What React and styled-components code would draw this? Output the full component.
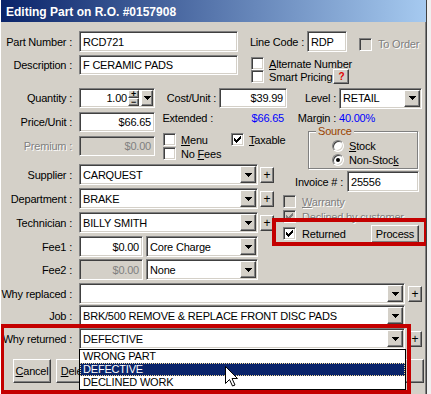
import React from "react";
import styled, { createGlobalStyle, css } from "styled-components";

const GlobalStyle = createGlobalStyle`
  html, body { margin: 0; padding: 0; }
  body {
    background: #f0f0f0;
    font-family: "Liberation Sans", Arial, sans-serif;
    font-size: 11px;
    letter-spacing: -0.2px;
    color: #000;
    overflow: hidden;
  }
`;

const sunken = css`
  box-sizing: border-box;
  border: 1px solid;
  border-color: #808080 #fff #fff #808080;
  box-shadow: inset 1px 1px #404040, inset -1px -1px #d4d0c8;
`;

const raised = css`
  box-sizing: border-box;
  background: #d4d0c8;
  border: 1px solid;
  border-color: #fff #404040 #404040 #fff;
  box-shadow: inset -1px -1px #808080;
`;

const greyText = css`
  color: #808080;
  text-shadow: 1px 1px 0 #fff;
`;

const Window = styled.div`
  width: 427px;
  height: 394px;
  box-sizing: border-box;
  background: #d4d0c8;
  border-left: 1px solid #fff;
  border-right: 1px solid #404040;
  box-shadow: inset -1px 0 #808080;
  overflow: hidden;
`;

const TitleBar = styled.div`
  height: 22px;
  box-sizing: border-box;
  padding: 3px 0 0 5px;
  line-height: 19px;
  background: linear-gradient(to right, #0a246a, #a6caf0);
  color: #fff;
  font-weight: bold;
  font-size: 12px;
  letter-spacing: 0;
  white-space: nowrap;
`;

const Body = styled.div`
  display: flow-root;
`;

const Row = styled.div`
  position: relative;
  display: flex;
  align-items: ${(p) => p.$align || "center"};
  height: ${(p) => p.$h || 21}px;
  margin-top: ${(p) => p.$mt || 0}px;
  padding-left: ${(p) => p.$pl || 0}px;
`;

const Label = styled.div`
  flex: none;
  width: ${(p) => p.$w || 78}px;
  padding-right: ${(p) => p.$pr ?? 7}px;
  box-sizing: border-box;
  text-align: right;
  white-space: nowrap;
  ${(p) => p.$grey && greyText}
`;

const Blue = styled.div`
  flex: none;
  align-self: flex-start;
  width: ${(p) => (p.$w ? `${p.$w}px` : "auto")};
  padding-right: ${(p) => p.$pr || 0}px;
  box-sizing: border-box;
  text-align: right;
  line-height: 13px;
  color: #0000ff;
`;

const TopText = styled(Label)`
  align-self: flex-start;
  line-height: 13px;
`;

const Edit = styled.div`
  ${sunken};
  flex: none;
  width: ${(p) => p.$w}px;
  height: ${(p) => p.$h || 20}px;
  margin-left: ${(p) => p.$ml || 0}px;
  padding: 0 ${(p) => (p.$right ? 3 : 2)}px 0 3px;
  display: flex;
  align-items: center;
  justify-content: ${(p) => (p.$right ? "flex-end" : "flex-start")};
  background: ${(p) => (p.$grey ? "#d4d0c8" : "#fff")};
  color: ${(p) => (p.$grey ? "#808080" : "#000")};
  white-space: nowrap;
  overflow: hidden;
`;

const ComboBox = styled.div`
  ${sunken};
  flex: none;
  width: ${(p) => p.$w}px;
  height: 21px;
  margin-left: ${(p) => p.$ml || 0}px;
  padding: 1px 1px 1px 3px;
  display: flex;
  align-items: center;
  background: #fff;
`;

const ComboText = styled.span`
  flex: 1;
  white-space: nowrap;
  overflow: hidden;
`;

const DropBtn = styled.span`
  ${raised};
  flex: none;
  width: ${(p) => p.$w || 16}px;
  height: ${(p) => p.$h || 17}px;
  margin-left: ${(p) => p.$ml || 0}px;
  display: flex;
  align-items: center;
  justify-content: center;
`;

const PlusBtn = styled.span`
  ${raised};
  flex: none;
  width: 14px;
  height: 16px;
  margin-left: ${(p) => p.$ml ?? 2}px;
  display: flex;
  align-items: center;
  justify-content: center;
  font-size: 12px;
  line-height: 1;
`;

const QtyBox = styled.div`
  ${sunken};
  flex: none;
  width: 76px;
  height: 20px;
  padding: 1px 1px 1px 3px;
  display: flex;
  align-items: center;
  background: #fff;
`;

const QtyText = styled.span`
  flex: 1;
  text-align: right;
  padding-right: 1px;
`;

const Spin = styled.span`
  flex: none;
  width: 11px;
  height: 16px;
  display: flex;
  flex-direction: column;
`;

const SpinHalf = styled.span`
  ${raised};
  height: 8px;
  display: flex;
  align-items: center;
  justify-content: center;
  font-size: 9px;
  font-weight: bold;
  line-height: 1;
`;

const CheckRow = styled.div`
  display: flex;
  align-items: center;
  gap: ${(p) => p.$gap ?? 5}px;
  height: 13px;
  margin-left: ${(p) => p.$ml || 0}px;
  margin-top: ${(p) => p.$mt || 0}px;
  white-space: nowrap;
`;

const Box = styled.span`
  ${sunken};
  flex: none;
  width: 13px;
  height: 13px;
  display: flex;
  align-items: center;
  justify-content: center;
  background: ${(p) => (p.$grey ? "#d4d0c8" : "#fff")};
`;

const CheckText = styled.span`
  ${(p) => p.$grey && greyText}
`;

const CheckCol = styled.div`
  flex: none;
  align-self: flex-start;
  display: flex;
  flex-direction: column;
  gap: ${(p) => p.$gap || 0}px;
  width: ${(p) => (p.$w ? `${p.$w}px` : "auto")};
  margin-left: ${(p) => p.$ml || 0}px;
  margin-top: ${(p) => p.$mt || 0}px;
`;

const HelpBtn = styled.span`
  ${raised};
  width: 16px;
  height: 15px;
  margin-left: -4px;
  display: flex;
  align-items: center;
  justify-content: center;
  color: #e00000;
  font-weight: bold;
  font-size: 10px;
`;

const FieldPair = styled.div`
  display: flex;
  align-items: center;
  margin-top: ${(p) => p.$mt || 0}px;
`;

const Columns = styled.div`
  display: flex;
  align-items: flex-start;
  height: 148px;
`;

const LeftCol = styled.div`
  flex: none;
  width: 272px;
`;

const RightCol = styled.div`
  flex: 1;
  margin-top: -1px;
`;

const GroupBox = styled.div`
  position: relative;
  box-sizing: border-box;
  width: 110px;
  height: 38px;
  margin-left: 35px;
  border: 1px solid #808080;
  box-shadow: inset 1px 1px #fff, 1px 1px 0 #fff;
  padding: 8px 0 0 23px;
  display: flex;
  flex-direction: column;
  gap: 2px;
`;

const Legend = styled.span`
  position: absolute;
  top: -7px;
  left: 7px;
  padding: 0 2px;
  line-height: 13px;
  background: #d4d0c8;
  color: #9a4300;
`;

const RadioRow = styled.div`
  display: flex;
  align-items: center;
  gap: 5px;
  height: 12px;
`;

const RadioDot = styled.span`
  ${sunken};
  flex: none;
  width: 12px;
  height: 12px;
  border-radius: 50%;
  background: #fff;
  display: flex;
  align-items: center;
  justify-content: center;
  &::after {
    content: "";
    width: 4px;
    height: 4px;
    border-radius: 50%;
    background: ${(p) => (p.$on ? "#000" : "transparent")};
  }
`;

const Highlight = styled.div`
  position: relative;
  margin-top: ${(p) => p.$mt || 0}px;
  &::after {
    content: "";
    position: absolute;
    top: ${(p) => p.$inset[0]}px;
    right: ${(p) => p.$inset[1]}px;
    bottom: ${(p) => p.$inset[2]}px;
    left: ${(p) => p.$inset[3]}px;
    border: 4px solid #c40000;
    pointer-events: none;
    z-index: 2;
  }
`;

const Button = styled.div`
  ${raised};
  flex: none;
  width: ${(p) => p.$w}px;
  height: ${(p) => p.$h || 24}px;
  margin-left: ${(p) => (p.$ml === "auto" ? "auto" : `${p.$ml || 0}px`)};
  margin-right: ${(p) => p.$mr || 0}px;
  display: flex;
  align-items: center;
  justify-content: center;
  white-space: nowrap;
`;

const DropList = styled.div`
  position: absolute;
  top: 21px;
  left: 78px;
  width: 327px;
  height: 41px;
  box-sizing: border-box;
  border: 1px solid #000;
  background: #fff;
  z-index: 3;
`;

const ListItem = styled.div`
  height: 13px;
  line-height: 13px;
  padding-left: 3px;
  white-space: nowrap;
  ${(p) =>
    p.$selected &&
    css`
      background: #0a246a;
      color: #fff;
      outline: 1px dotted #f5db95;
      outline-offset: -1px;
    `}
`;

const Cursor = styled.svg`
  position: absolute;
  left: 145px;
  top: 16px;
`;

const Arrow = () => (
  <svg width="7" height="4" viewBox="0 0 7 4" shapeRendering="crispEdges">
    <path d="M0 0h7v1H0zM1 1h5v1H1zM2 2h3v1H2zM3 3h1v1H3z" fill="#000" />
  </svg>
);

const Check = ({ on, grey }) => (
  <Box $grey={grey}>
    {on && (
      <svg width="7" height="7" viewBox="0 0 7 7" shapeRendering="crispEdges">
        <path
          fill={grey ? "#808080" : "#000"}
          d="M6 0h1v1H6zM5 1h2v1H5zM0 2h1v1H0zM4 2h3v1H4zM0 3h2v1H0zM3 3h3v1H3zM0 4h5v1H0zM1 5h3v1H1zM2 6h1v1H2z"
        />
      </svg>
    )}
  </Box>
);

const CheckItem = ({ on, grey, ml, mt, gap, children, extra }) => (
  <CheckRow $ml={ml} $mt={mt} $gap={gap}>
    <Check on={on} grey={grey} />
    <CheckText $grey={grey}>{children}</CheckText>
    {extra}
  </CheckRow>
);

const Combo = ({ w, ml, children }) => (
  <ComboBox $w={w} $ml={ml}>
    <ComboText>{children}</ComboText>
    <DropBtn>
      <Arrow />
    </DropBtn>
  </ComboBox>
);

const Radio = ({ on, children }) => (
  <RadioRow>
    <RadioDot $on={on} />
    <span>{children}</span>
  </RadioRow>
);

export default function App() {
  return (
    <>
      <GlobalStyle />
      <Window>
        <TitleBar>Editing Part on R.O. #0157908</TitleBar>
        <Body>
          <Row $mt={9}>
            <Label>Part Number :</Label>
            <Edit $w={159} $h={21}>RCD721</Edit>
            <Label $w={69} $pr={3}>Line Code :</Label>
            <Edit $w={40} $h={21}>RDP</Edit>
            <CheckItem grey ml={12} mt={5} gap={6}>
              To Order
            </CheckItem>
          </Row>

          <Row $mt={3} $h={20}>
            <Label>Description :</Label>
            <Edit $w={159}>F CERAMIC PADS</Edit>
            <CheckCol $ml={13} $mt={2}>
              <CheckItem>
                <u>A</u>lternate Number
              </CheckItem>
              <CheckItem extra={<HelpBtn>?</HelpBtn>}>Smart Pricing</CheckItem>
            </CheckCol>
          </Row>

          <Row $mt={13} $h={20}>
            <Label>Quantity :</Label>
            <QtyBox>
              <QtyText>1.00</QtyText>
              <Spin>
                <SpinHalf>+</SpinHalf>
                <SpinHalf>−</SpinHalf>
              </Spin>
              <DropBtn $w={12} $h={16} $ml={2}>
                <Arrow />
              </DropBtn>
            </QtyBox>
            <Label $w={64} $pr={3}>Cost/Unit :</Label>
            <Edit $w={68} $right>$39.99</Edit>
            <Label $w={52} $pr={3}>Level :</Label>
            <Combo w={83}>RETAIL</Combo>
          </Row>

          <Row $mt={4} $h={20}>
            <Label>Price/Unit :</Label>
            <Edit $w={76} $right>$66.65</Edit>
            <TopText $w={60} $pr={2}>Extended :</TopText>
            <Blue $w={72} $pr={3}>$66.65</Blue>
            <TopText $w={52} $pr={3}>Margin :</TopText>
            <Blue>40.00%</Blue>
          </Row>

          <Columns>
            <LeftCol>
              <Row $mt={1} $h={27} $align="flex-start">
                <FieldPair $mt={3}>
                  <Label $grey>Premium :</Label>
                  <Edit $w={76} $right $grey>$0.00</Edit>
                </FieldPair>
                <CheckCol $ml={8} $w={68} $gap={1}>
                  <CheckItem>
                    <u>M</u>enu
                  </CheckItem>
                  <CheckItem>
                    No <u>F</u>ees
                  </CheckItem>
                </CheckCol>
                <CheckItem on>
                  <u>T</u>axable
                </CheckItem>
              </Row>
              <Row $mt={4}>
                <Label>Supplier :</Label>
                <Combo w={179}>CARQUEST</Combo>
                <PlusBtn>+</PlusBtn>
              </Row>
              <Row $mt={3}>
                <Label>Department :</Label>
                <Combo w={179}>BRAKE</Combo>
                <PlusBtn>+</PlusBtn>
              </Row>
              <Row $mt={3}>
                <Label>Technician :</Label>
                <Combo w={179}>BILLY SMITH</Combo>
                <PlusBtn>+</PlusBtn>
              </Row>
              <Row $mt={3}>
                <Label>Fee1 :</Label>
                <Edit $w={64} $h={21} $right>$0.00</Edit>
                <Combo w={112} ml={3}>Core Charge</Combo>
              </Row>
              <Row $mt={2}>
                <Label>Fee2 :</Label>
                <Edit $w={64} $h={21} $right $grey>$0.00</Edit>
                <Combo w={112} ml={3}>None</Combo>
              </Row>
            </LeftCol>

            <RightCol>
              <GroupBox>
                <Legend>Source</Legend>
                <Radio>
                  <u>S</u>tock
                </Radio>
                <Radio on>
                  Non-Stoc<u>k</u>
                </Radio>
              </GroupBox>
              <Row $mt={2}>
                <Label $w={74} $pr={4}>Invoice # :</Label>
                <Edit $w={72} $h={21}>25556</Edit>
              </Row>
              <CheckItem grey ml={10} mt={3} gap={6}>
                <u>W</u>arranty
              </CheckItem>
              <CheckItem grey on ml={10} mt={2} gap={6}>
                Declined by customer
              </CheckItem>
              <Highlight $mt={1} $inset={[-6, -2, -3, -1]}>
                <Row $h={19} $pl={10}>
                  <CheckItem on gap={6}>
                    Returned
                  </CheckItem>
                  <Button $w={48} $h={18} $ml="auto" $mr={7}>
                    Process
                  </Button>
                </Row>
              </Highlight>
            </RightCol>
          </Columns>

          <Row $mt={3}>
            <Label>Why replaced :</Label>
            <Combo w={326} />
            <PlusBtn $ml={3}>+</PlusBtn>
          </Row>
          <Row $mt={1}>
            <Label>Job :</Label>
            <Combo w={326}>BRK/500 REMOVE &amp; REPLACE FRONT DISC PADS</Combo>
          </Row>

          <Highlight $mt={2} $inset={[-4, 15, -11, -1]}>
            <Row>
              <Label>Why returned :</Label>
              <Combo w={326}>DEFECTIVE</Combo>
              <PlusBtn $ml={3}>+</PlusBtn>
              <DropList>
                <ListItem>WRONG PART</ListItem>
                <ListItem $selected>DEFECTIVE</ListItem>
                <ListItem>DECLINED WORK</ListItem>
                <Cursor width="13" height="21" viewBox="0 0 13 21">
                  <path
                    d="M0.5 0.5V17.5L4.5 13.5L7.5 20L10 19L7 12.5H12.5Z"
                    fill="#fff"
                    stroke="#000"
                    strokeWidth="1"
                  />
                </Cursor>
              </DropList>
            </Row>
            <Row $mt={10} $h={24}>
              <Button $w={38} $ml={12}>
                <u>C</u>ancel
              </Button>
              <Button $w={40} $ml={5}>
                <u>D</u>elete
              </Button>
              <Button $w={83} $ml="auto" $mr={2}>
                OK
              </Button>
            </Row>
          </Highlight>
        </Body>
      </Window>
    </>
  );
}
